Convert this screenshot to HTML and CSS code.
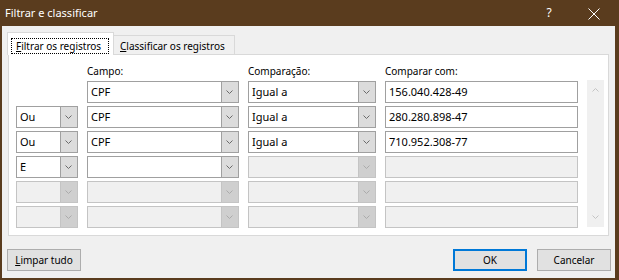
FILE: index.html
```html
<!DOCTYPE html>
<html lang="pt">
<head>
<meta charset="utf-8">
<title>Filtrar e classificar</title>
<link rel="stylesheet" href="styles.css">
</head>
<body>
<div class="window">
  <div class="titlebar">
    <span class="title">Filtrar e classificar</span>
    <span class="tb-help">?</span>
    <span class="tb-close"><svg width="12" height="12" viewBox="0 0 12 12"><path d="M0.5 0.5 L11.5 11.5 M11.5 0.5 L0.5 11.5" stroke="#fff" stroke-width="1" fill="none"/></svg></span>
  </div>
  <div class="client">
    <div class="tabs">
      <div class="tab active"><span class="focus"><u>F</u>iltrar os registros</span></div>
      <div class="tab"><u>C</u>lassificar os registros</div>
    </div>
    <div class="panel">
      <div class="grid">
        <div></div>
        <div class="hdr">Campo:</div>
        <div class="hdr">Comparação:</div>
        <div class="hdr">Comparar com:</div>
        <div></div>
        <div class="scrollbar">
          <svg width="7" height="4" viewBox="0 0 7 4"><path d="M0.5 3.5 L3.5 0.5 L6.5 3.5" stroke="#c4c4c4" fill="none"/></svg>
          <svg width="7" height="4" viewBox="0 0 7 4"><path d="M0.5 0.5 L3.5 3.5 L6.5 0.5" stroke="#c4c4c4" fill="none"/></svg>
        </div>

        <div></div>
        <div class="combo"><span class="val">CPF</span><span class="btn"><svg width="7" height="4" viewBox="0 0 7 4"><path d="M0.5 0.5 L3.5 3.5 L6.5 0.5" fill="none"/></svg></span></div>
        <div class="combo"><span class="val">Igual a</span><span class="btn"><svg width="7" height="4" viewBox="0 0 7 4"><path d="M0.5 0.5 L3.5 3.5 L6.5 0.5" fill="none"/></svg></span></div>
        <div class="input">156.040.428-49</div>

        <div class="combo"><span class="val">Ou</span><span class="btn"><svg width="7" height="4" viewBox="0 0 7 4"><path d="M0.5 0.5 L3.5 3.5 L6.5 0.5" fill="none"/></svg></span></div>
        <div class="combo"><span class="val">CPF</span><span class="btn"><svg width="7" height="4" viewBox="0 0 7 4"><path d="M0.5 0.5 L3.5 3.5 L6.5 0.5" fill="none"/></svg></span></div>
        <div class="combo"><span class="val">Igual a</span><span class="btn"><svg width="7" height="4" viewBox="0 0 7 4"><path d="M0.5 0.5 L3.5 3.5 L6.5 0.5" fill="none"/></svg></span></div>
        <div class="input">280.280.898-47</div>

        <div class="combo"><span class="val">Ou</span><span class="btn"><svg width="7" height="4" viewBox="0 0 7 4"><path d="M0.5 0.5 L3.5 3.5 L6.5 0.5" fill="none"/></svg></span></div>
        <div class="combo"><span class="val">CPF</span><span class="btn"><svg width="7" height="4" viewBox="0 0 7 4"><path d="M0.5 0.5 L3.5 3.5 L6.5 0.5" fill="none"/></svg></span></div>
        <div class="combo"><span class="val">Igual a</span><span class="btn"><svg width="7" height="4" viewBox="0 0 7 4"><path d="M0.5 0.5 L3.5 3.5 L6.5 0.5" fill="none"/></svg></span></div>
        <div class="input">710.952.308-77</div>

        <div class="combo"><span class="val">E</span><span class="btn"><svg width="7" height="4" viewBox="0 0 7 4"><path d="M0.5 0.5 L3.5 3.5 L6.5 0.5" fill="none"/></svg></span></div>
        <div class="combo"><span class="val"></span><span class="btn"><svg width="7" height="4" viewBox="0 0 7 4"><path d="M0.5 0.5 L3.5 3.5 L6.5 0.5" fill="none"/></svg></span></div>
        <div class="combo disabled"><span class="val"></span><span class="btn"><svg width="7" height="4" viewBox="0 0 7 4"><path d="M0.5 0.5 L3.5 3.5 L6.5 0.5" fill="none"/></svg></span></div>
        <div class="input disabled"></div>

        <div class="combo disabled"><span class="val"></span><span class="btn"><svg width="7" height="4" viewBox="0 0 7 4"><path d="M0.5 0.5 L3.5 3.5 L6.5 0.5" fill="none"/></svg></span></div>
        <div class="combo disabled"><span class="val"></span><span class="btn"><svg width="7" height="4" viewBox="0 0 7 4"><path d="M0.5 0.5 L3.5 3.5 L6.5 0.5" fill="none"/></svg></span></div>
        <div class="combo disabled"><span class="val"></span><span class="btn"><svg width="7" height="4" viewBox="0 0 7 4"><path d="M0.5 0.5 L3.5 3.5 L6.5 0.5" fill="none"/></svg></span></div>
        <div class="input disabled"></div>

        <div class="combo disabled"><span class="val"></span><span class="btn"><svg width="7" height="4" viewBox="0 0 7 4"><path d="M0.5 0.5 L3.5 3.5 L6.5 0.5" fill="none"/></svg></span></div>
        <div class="combo disabled"><span class="val"></span><span class="btn"><svg width="7" height="4" viewBox="0 0 7 4"><path d="M0.5 0.5 L3.5 3.5 L6.5 0.5" fill="none"/></svg></span></div>
        <div class="combo disabled"><span class="val"></span><span class="btn"><svg width="7" height="4" viewBox="0 0 7 4"><path d="M0.5 0.5 L3.5 3.5 L6.5 0.5" fill="none"/></svg></span></div>
        <div class="input disabled"></div>
      </div>
    </div>
    <div class="footer">
      <button class="btn-w"><u>L</u>impar tudo</button>
      <span class="spacer"></span>
      <button class="btn-w ok">OK</button>
      <button class="btn-w">Cancelar</button>
    </div>
  </div>
</div>
</body>
</html>
```

FILE: styles.css
```css
* { box-sizing: border-box; }
html, body { margin: 0; padding: 0; }
body {
  width: 619px;
  height: 280px;
  overflow: hidden;
  font-family: "Noto Sans", "Open Sans", sans-serif;
  font-size: 10px;
  color: #000;
}
.window {
  width: 619px;
  height: 280px;
  background: #5a3c1e;
  display: flex;
  flex-direction: column;
}
.titlebar {
  height: 26px;
  flex: none;
  display: flex;
  align-items: center;
  padding-left: 5px;
  color: #fff;
}
.title {
  font-size: 11px;
  line-height: 26px;
  flex: 1;
}
.tb-help {
  font-size: 12px;
  line-height: 26px;
  width: 10px;
  text-align: center;
  margin-right: 34px;
}
.tb-close {
  display: flex;
  width: 12px;
  height: 12px;
  margin-right: 19px;
  margin-top: 1px;
}
.client {
  flex: 1;
  margin: 0 4px 2px 2px;
  background: #f0f0f0;
  display: flex;
  flex-direction: column;
  padding: 6px 4px 7px 5px;
}
.tabs {
  height: 22px;
  display: flex;
  align-items: flex-end;
  position: relative;
  z-index: 1;
}
.tab {
  border: 1px solid #d9d9d9;
  border-bottom: none;
  background: #f0f0f0;
  line-height: 14px;
  white-space: nowrap;
}
.tab.active {
  width: 107px;
  height: 23px;
  margin-bottom: -1px;
  background: #fff;
  padding: 5px 0 0 3px;
}
.tab:not(.active) {
  width: 121px;
  height: 19px;
  border-left: none;
  padding: 3px 0 0 6px;
}
.focus {
  display: inline-block;
  height: 16px;
  border: 1px dotted #000;
  padding: 0 7px 0 4px;
  line-height: 14px;
}
.panel {
  height: 182px;
  margin: 0 2px 0 1px;
  border: 1px solid #d9d9d9;
  background: #fff;
  padding: 10px 4px 7px 7px;
}
.grid {
  display: grid;
  grid-template-columns: 62px 152px 128px 193px 17px;
  grid-template-rows: 13px repeat(6, 22px);
  column-gap: 9px;
  row-gap: 3px;
}
.hdr {
  line-height: 13px;
  white-space: nowrap;
}
.scrollbar {
  grid-column: 5;
  grid-row: 2 / 8;
  margin: -1px 0 1px 0;
  background: #f0f0f0;
  display: flex;
  flex-direction: column;
  justify-content: space-between;
  align-items: center;
  padding: 8px 0 8px 0;
}
.scrollbar svg { display: block; }
.combo {
  display: flex;
  border: 1px solid #a0a0a0;
  background: #fff;
  height: 22px;
}
.combo .val {
  flex: 1;
  font-size: 11px;
  line-height: 20px;
  padding-left: 3px;
  white-space: nowrap;
  overflow: hidden;
}
.combo .btn {
  width: 17px;
  flex: none;
  border-left: 1px solid #a0a0a0;
  background: #dcdcdc;
  display: flex;
  align-items: center;
  justify-content: center;
  padding-right: 1px;
}
.combo .btn svg { display: block; stroke: #6a6a6a; stroke-width: 1; }
.combo.disabled { border-color: #c4c4c4; background: #f0f0f0; }
.combo.disabled .btn { border-left-color: #c4c4c4; background: #cfcfcf; }
.combo.disabled .btn svg { stroke: #ababab; }
.input {
  border: 1px solid #a0a0a0;
  background: #fff;
  height: 22px;
  font-size: 11px;
  line-height: 20px;
  padding-left: 3px;
  white-space: nowrap;
}
.input.disabled { border-color: #c4c4c4; background: #f0f0f0; }
.footer {
  margin-top: 13px;
  display: flex;
  gap: 10px;
}
.spacer { flex: 1; }
.btn-w {
  width: 74px;
  height: 22px;
  border: 1px solid #adadad;
  background: #e1e1e1;
  font-family: "Noto Sans", "Open Sans", sans-serif;
  font-size: 10px;
  line-height: 20px;
  padding: 0;
  color: #000;
  text-align: center;
}
.btn-w.ok { border: 2px solid #0078d7; line-height: 18px; }
```
